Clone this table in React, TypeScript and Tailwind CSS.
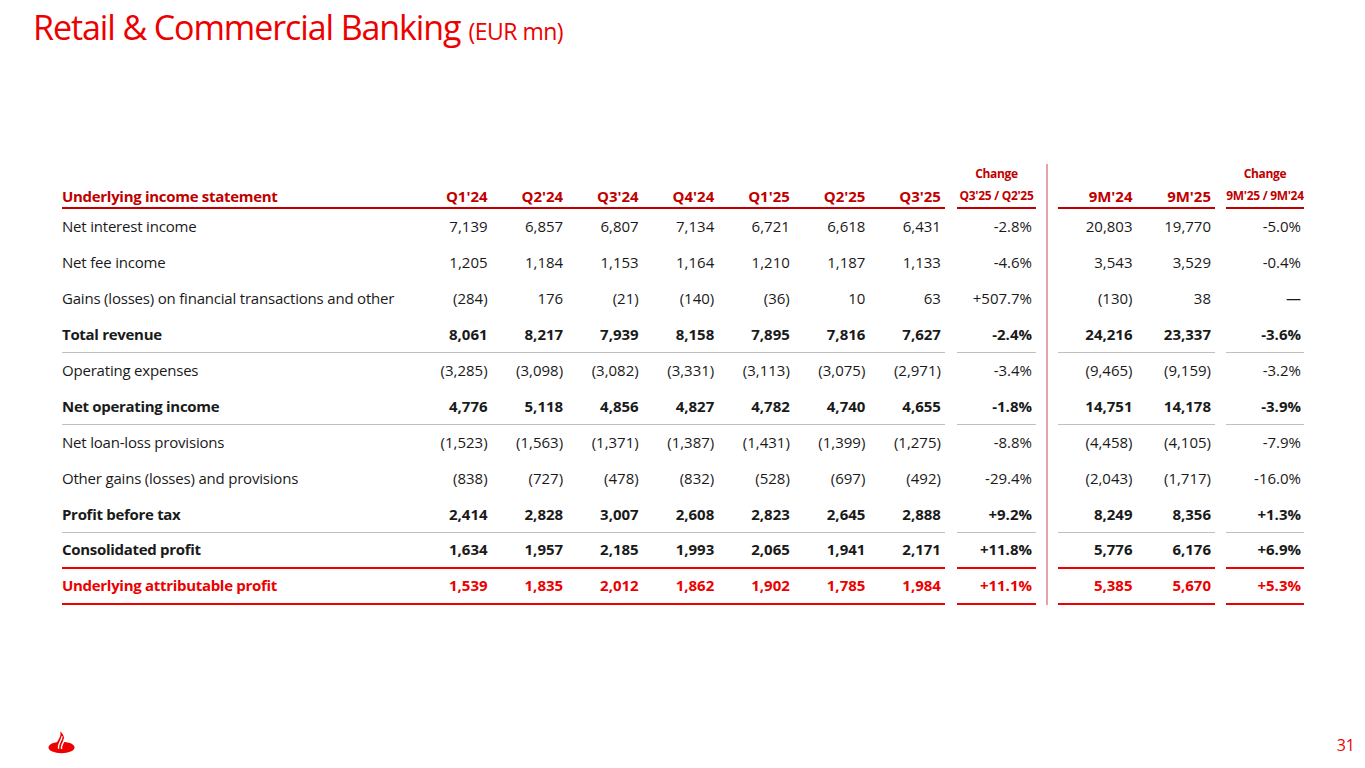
import React from 'react';

type Row = {
    label: string;
    q: string[];
    chg: string;
    nm: string[];
    chg2: string;
    bold?: boolean;
    red?: boolean;
    line?: 'gray' | 'red';
};

const rows: Row[] = [
    { label: 'Net interest income', q: ['7,139', '6,857', '6,807', '7,134', '6,721', '6,618', '6,431'], chg: '-2.8%', nm: ['20,803', '19,770'], chg2: '-5.0%' },
    { label: 'Net fee income', q: ['1,205', '1,184', '1,153', '1,164', '1,210', '1,187', '1,133'], chg: '-4.6%', nm: ['3,543', '3,529'], chg2: '-0.4%' },
    { label: 'Gains (losses) on financial transactions and other', q: ['(284)', '176', '(21)', '(140)', '(36)', '10', '63'], chg: '+507.7%', nm: ['(130)', '38'], chg2: '—' },
    { label: 'Total revenue', q: ['8,061', '8,217', '7,939', '8,158', '7,895', '7,816', '7,627'], chg: '-2.4%', nm: ['24,216', '23,337'], chg2: '-3.6%', bold: true, line: 'gray' },
    { label: 'Operating expenses', q: ['(3,285)', '(3,098)', '(3,082)', '(3,331)', '(3,113)', '(3,075)', '(2,971)'], chg: '-3.4%', nm: ['(9,465)', '(9,159)'], chg2: '-3.2%' },
    { label: 'Net operating income', q: ['4,776', '5,118', '4,856', '4,827', '4,782', '4,740', '4,655'], chg: '-1.8%', nm: ['14,751', '14,178'], chg2: '-3.9%', bold: true, line: 'gray' },
    { label: 'Net loan-loss provisions', q: ['(1,523)', '(1,563)', '(1,371)', '(1,387)', '(1,431)', '(1,399)', '(1,275)'], chg: '-8.8%', nm: ['(4,458)', '(4,105)'], chg2: '-7.9%' },
    { label: 'Other gains (losses) and provisions', q: ['(838)', '(727)', '(478)', '(832)', '(528)', '(697)', '(492)'], chg: '-29.4%', nm: ['(2,043)', '(1,717)'], chg2: '-16.0%' },
    { label: 'Profit before tax', q: ['2,414', '2,828', '3,007', '2,608', '2,823', '2,645', '2,888'], chg: '+9.2%', nm: ['8,249', '8,356'], chg2: '+1.3%', bold: true, line: 'gray' },
    { label: 'Consolidated profit', q: ['1,634', '1,957', '2,185', '1,993', '2,065', '1,941', '2,171'], chg: '+11.8%', nm: ['5,776', '6,176'], chg2: '+6.9%', bold: true, line: 'red' },
    { label: 'Underlying attributable profit', q: ['1,539', '1,835', '2,012', '1,862', '1,902', '1,785', '1,984'], chg: '+11.1%', nm: ['5,385', '5,670'], chg2: '+5.3%', bold: true, red: true, line: 'red' },
];

const quarters = ["Q1'24", "Q2'24", "Q3'24", "Q4'24", "Q1'25", "Q2'25", "Q3'25"];

function lineClass(line?: 'gray' | 'red') {
    if (line === 'gray') return 'border-b border-[#bfbfbf]';
    if (line === 'red') return 'border-b-2 border-[#ec0000]';
    return 'border-b border-transparent';
}

function Flame() {
    return (
        <svg width="27" height="23" viewBox="0 0 26 22">
            <ellipse cx="13" cy="15.8" rx="12.5" ry="5.6" fill="#ec0000" />
            <path d="M8.6 15.5 C6.8 11.5 10.8 8.6 11.8 4.6 C12.2 2.8 12.1 1.4 11.7 0.2 C15.2 3.2 16.4 6.6 14.6 10.2 C13.6 12.2 13.9 13.8 15.6 15.6 Z" fill="#ec0000" />
            <path d="M10.4 17 C8.8 12.8 13.2 9.6 13.6 5" stroke="white" strokeWidth="1.3" fill="none" />
            <path d="M13.2 17.2 C11.8 13.8 15.6 11.2 15.8 7.4" stroke="white" strokeWidth="1.3" fill="none" />
        </svg>
    );
}

export default function App() {
    return (
        <div className="w-[1365px] h-[768px] bg-white flex flex-col text-[#1a1a1a]" style={{ fontFamily: '"Open Sans", "Noto Sans", sans-serif' }}>
            <h1 className="pl-[33px] pt-[7px] h-[50px] text-[#ec0000] flex items-baseline">
                <span className="text-[34px] tracking-[-1.1px] leading-[40px]">Retail &amp; Commercial Banking</span>
                <span className="ml-[8px] text-[23px] tracking-[-0.5px]">(EUR mn)</span>
            </h1>

            <div className="mt-[114px] pl-[62px] flex flex-col text-[15px] leading-[20px]">
                {/* header */}
                <div className="flex h-[45px]">
                    <div className="w-[883px] flex items-end border-b-2 border-[#c00000] text-[#c00000] font-bold pb-[1px]">
                        <div className="w-[354px] tracking-[-0.3px]">Underlying income statement</div>
                        {quarters.map((q) => (
                            <div key={q} className="w-[75.57px] text-right pr-[4px]">{q}</div>
                        ))}
                    </div>
                    <div className="w-[12px]" />
                    <div className="w-[79px] flex flex-col items-center justify-end border-b-2 border-[#c00000] text-[#c00000] font-bold text-[12px] tracking-[-0.3px] pb-[3px]">
                        <div className="leading-[16px]">Change</div>
                        <div className="mt-[6px] leading-[16px] whitespace-nowrap">Q3'25 / Q2'25</div>
                    </div>
                    <div className="w-[22px]">
                        <div className="ml-[10px] h-full border-l-2 border-[#e8a2a5]" />
                    </div>
                    <div className="w-[157px] flex items-end border-b-2 border-[#c00000] text-[#c00000] font-bold pb-[1px]">
                        <div className="w-[78.5px] text-right pr-[4px]">9M'24</div>
                        <div className="w-[78.5px] text-right pr-[4px]">9M'25</div>
                    </div>
                    <div className="w-[11px]" />
                    <div className="w-[78px] flex flex-col items-center justify-end border-b-2 border-[#c00000] text-[#c00000] font-bold text-[12px] tracking-[-0.3px] pb-[3px]">
                        <div className="leading-[16px]">Change</div>
                        <div className="mt-[6px] leading-[16px] whitespace-nowrap">9M'25 / 9M'24</div>
                    </div>
                </div>

                {rows.map((r) => {
                    const lc = lineClass(r.line);
                    const txt = `${r.bold ? 'font-bold' : ''} ${r.red ? 'text-[#ec0000]' : ''}`;
                    return (
                        <div key={r.label} className={`flex h-[36px] ${txt}`}>
                            <div className={`w-[883px] flex items-center pb-[2px] ${lc}`}>
                                <div className={`w-[354px] ${r.bold ? 'tracking-[-0.3px]' : 'tracking-[-0.2px]'}`}>{r.label}</div>
                                {r.q.map((v, i) => (
                                    <div key={i} className="w-[75.57px] text-right pr-[4px]">{v}</div>
                                ))}
                            </div>
                            <div className="w-[12px]" />
                            <div className={`w-[79px] flex items-center justify-end pr-[4px] pb-[2px] ${lc}`}>{r.chg}</div>
                            <div className="w-[22px]">
                                <div className="ml-[10px] h-full border-l-2 border-[#e8a2a5]" />
                            </div>
                            <div className={`w-[157px] flex items-center pb-[2px] ${lc}`}>
                                {r.nm.map((v, i) => (
                                    <div key={i} className="w-[78.5px] text-right pr-[4px]">{v}</div>
                                ))}
                            </div>
                            <div className="w-[11px]" />
                            <div className={`w-[78px] flex items-center justify-end pr-[3px] pb-[2px] ${lc}`}>{r.chg2}</div>
                        </div>
                    );
                })}
            </div>

            <div className="mt-auto h-[50px] pl-[48px] pr-[10px] pb-[14px] flex items-end justify-between">
                <Flame />
                <span className="text-[#ec0000] text-[16px] leading-[20px] mb-[-1px]">31</span>
            </div>
        </div>
    );
}
